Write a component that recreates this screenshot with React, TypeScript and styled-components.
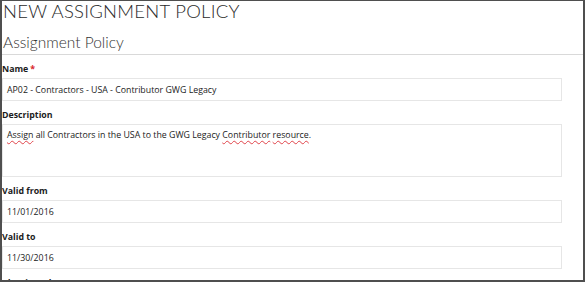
import React from 'react';
import styled, {createGlobalStyle} from 'styled-components';

const GlobalStyle = createGlobalStyle`
  html, body {
    margin: 0;
    padding: 0;
    background: #ffffff;
  }
`;

const Frame = styled.div`
  box-sizing: border-box;
  width: 585px;
  height: 282px;
  overflow: hidden;
  background: #ffffff;
  border-left: 2px solid #4f4f4f;
  border-top: 1px solid #4f4f4f;
  border-right: 2px solid #4f4f4f;
  border-bottom: 2px solid #4f4f4f;
`;

const PageTitle = styled.h1`
  margin: 0;
  padding-left: 1px;
  font-family: Lato, "Liberation Sans", sans-serif;
  font-weight: 300;
  font-size: 18.5px;
  line-height: 21px;
  letter-spacing: 0.25px;
  color: #2a2a2a;
`;

const SectionTitle = styled.h2`
  margin: 10px 0 0;
  padding: 0 0 2px 1px;
  font-family: Lato, "Liberation Sans", sans-serif;
  font-weight: 300;
  font-size: 15.5px;
  line-height: 20px;
  color: #333333;
  border-bottom: 1px solid #d9d9d9;
`;

const Form = styled.div`
  display: flex;
  flex-direction: column;
  padding-right: 21px;
`;

const Field = styled.div`
  display: flex;
  flex-direction: column;
  margin-top: 8px;
`;

const Label = styled.div`
  font-family: "Open Sans", "Liberation Sans", sans-serif;
  font-weight: 700;
  font-size: 8.8px;
  line-height: 12px;
  color: #1c1c1c;
  margin-bottom: 3px;
`;

const Required = styled.span`
  color: #d9262b;
  margin-left: 2px;
`;

const Box = styled.div<{$tall?: boolean}>`
  box-sizing: border-box;
  height: ${p => (p.$tall ? '53px' : '23px')};
  border: 1px solid #e6e6e6;
  padding: ${p => (p.$tall ? '3px 4px' : '0 4px')};
  display: flex;
  align-items: ${p => (p.$tall ? 'flex-start' : 'center')};
  font-family: "Open Sans", "Liberation Sans", sans-serif;
  font-size: 8.8px;
  line-height: 14px;
  color: #222222;
`;

const Misspelt = styled.span`
  text-decoration: underline wavy #e0434a;
  text-decoration-thickness: 0.6px;
  text-underline-offset: 1.5px;
`;

const App: React.FC = () => {
    return (
        <>
            <GlobalStyle/>
            <Frame>
                <PageTitle>NEW ASSIGNMENT POLICY</PageTitle>
                <SectionTitle>Assignment Policy</SectionTitle>
                <Form>
                    <Field>
                        <Label>Name<Required>*</Required></Label>
                        <Box>AP02 - Contractors - USA - Contributor GWG Legacy</Box>
                    </Field>
                    <Field>
                        <Label>Description</Label>
                        <Box $tall>
                            <span>
                                <Misspelt>Assign</Misspelt> all Contractors in the USA to the GWG Legacy{' '}
                                <Misspelt>Contributor</Misspelt> <Misspelt>resource</Misspelt>.
                            </span>
                        </Box>
                    </Field>
                    <Field>
                        <Label>Valid from</Label>
                        <Box>11/01/2016</Box>
                    </Field>
                    <Field>
                        <Label>Valid to</Label>
                        <Box>11/30/2016</Box>
                    </Field>
                    <Field>
                        <Label>Identity rule</Label>
                        <Box/>
                    </Field>
                </Form>
            </Frame>
        </>
    );
}

export default App;
